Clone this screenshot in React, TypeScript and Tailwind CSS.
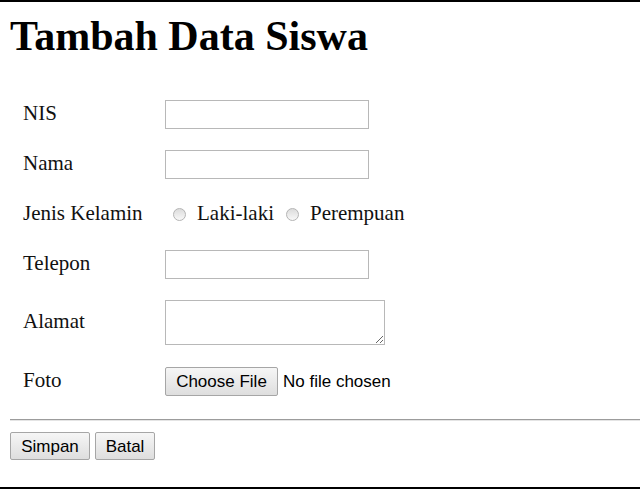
import React from "react";

const serif = { fontFamily: '"Liberation Serif", "Times New Roman", serif' };
const sans = { fontFamily: '"Liberation Sans", Arial, sans-serif' };

function Radio() {
  return (
    <span className="inline-block w-[13px] h-[13px] rounded-full border border-[#b4b4b4] bg-gradient-to-b from-[#dcdcdc] to-[#f8f8f8] shrink-0 align-middle" />
  );
}

function TextInput() {
  return <input type="text" className="w-[204px] h-[29px] border border-[#b8b8b8] bg-white outline-none px-1" />;
}

function Row({ label, children, h = "h-[29px]" }: { label: string; children: React.ReactNode; h?: string }) {
  return (
    <div className={`flex items-center ${h}`}>
      <div className="w-[155px] shrink-0 pl-[13px] pb-[3px] text-[21px] leading-[24px] text-[#111]">{label}</div>
      <div className="flex items-center">{children}</div>
    </div>
  );
}

export default function App() {
  return (
    <div className="w-[640px] h-[489px] bg-white border-t-2 border-b-2 border-black overflow-hidden" style={serif}>
      <h1 className="mt-[9px] ml-[10px] text-[42px] leading-[50px] font-bold text-black">Tambah Data Siswa</h1>
      <div className="mt-[39px] ml-[10px] flex flex-col gap-[21px]">
        <Row label="NIS"><TextInput /></Row>
        <Row label="Nama"><TextInput /></Row>
        <Row label="Jenis Kelamin">
          <div className="flex items-center text-[21px] leading-[24px] text-[#111]">
            <span className="ml-[8px] flex"><Radio /></span>
            <span className="ml-[11px] pb-[3px]">Laki-laki</span>
            <span className="ml-[12px] flex"><Radio /></span>
            <span className="ml-[11px] pb-[3px]">Perempuan</span>
          </div>
        </Row>
        <Row label="Telepon"><TextInput /></Row>
        <Row label="Alamat" h="h-[45px]">
          <textarea className="w-[220px] h-[45px] border border-[#b8b8b8] bg-white outline-none resize block" />
        </Row>
        <div className="mt-px">
          <Row label="Foto">
            <div className="flex items-center" style={sans}>
              <button className="w-[113px] h-[29px] border border-[#a6a6a6] rounded-[2px] bg-gradient-to-b from-[#f6f6f6] to-[#dedede] text-[17px] text-black leading-none">
                Choose File
              </button>
              <span className="ml-[5px] text-[17px] text-black">No file chosen</span>
            </div>
          </Row>
        </div>
      </div>
      <div className="ml-[10px] mt-[23px] border-t border-t-[#9c9c9c] border-b border-b-[#e4e4e4]" />
      <div className="ml-[10px] mt-[11px] flex gap-[5px]" style={sans}>
        <button className="w-[80px] h-[28px] border border-[#a6a6a6] rounded-[2px] bg-gradient-to-b from-[#f6f6f6] to-[#dedede] text-[17px] text-black leading-none">Simpan</button>
        <button className="w-[60px] h-[28px] border border-[#a6a6a6] rounded-[2px] bg-gradient-to-b from-[#f6f6f6] to-[#dedede] text-[17px] text-black leading-none">Batal</button>
      </div>
    </div>
  );
}
